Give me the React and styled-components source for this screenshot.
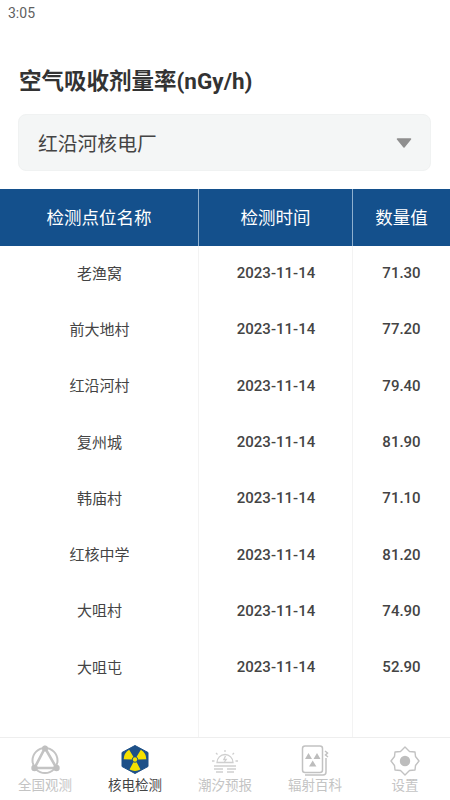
import React from 'react';
import styled, { createGlobalStyle } from 'styled-components';

const GlobalStyle = createGlobalStyle`
  * {
    box-sizing: border-box;
    margin: 0;
    padding: 0;
  }

  body {
    background: #fff;
    font-family: Roboto, "Noto Sans CJK SC", sans-serif;
  }
`;

const Page = styled.div`
  width: 450px;
  height: 800px;
  display: flex;
  flex-direction: column;
  overflow: hidden;
  background: #fff;
`;

const StatusBar = styled.div`
  height: 25px;
  padding: 4px 0 0 8px;
  font-size: 14px;
  line-height: 18px;
  color: #5f5f5f;
`;

const Title = styled.h1`
  margin: 41px 0 0 19px;
  font-size: 22.5px;
  line-height: 30px;
  font-weight: 700;
  color: #333;
`;

const Select = styled.div`
  margin: 18px 19px 18px 18px;
  height: 57px;
  padding: 0 18px 0 19px;
  display: flex;
  align-items: center;
  justify-content: space-between;
  background: #f4f6f6;
  border: 1px solid #f0f2f2;
  border-radius: 8px;
  font-size: 19.8px;
  color: #444;
`;

const Caret = styled.svg`
  width: 16px;
  height: 10px;
  display: block;
`;

const Table = styled.div`
  flex: 1;
  display: flex;
  flex-direction: column;
  min-height: 0;
`;

const HeadRow = styled.div`
  display: grid;
  grid-template-columns: 199px 154px 97px;
  height: 57px;
  background: #14508c;
`;

const HeadCell = styled.div`
  display: flex;
  align-items: center;
  justify-content: center;
  padding-bottom: 2px;
  font-size: 17.5px;
  color: #fff;
  border-right: ${p => (p.$last ? 'none' : '1px solid #8fb0cf')};
`;

const Body = styled.div`
  flex: 1;
  display: grid;
  grid-template-columns: 199px 154px 97px;
  grid-auto-rows: 56.3px;
  background:
    linear-gradient(#f3f3f3, #f3f3f3) 198px 0 / 1px 100% no-repeat,
    linear-gradient(#f3f3f3, #f3f3f3) 352px 0 / 1px 100% no-repeat;
`;

const Cell = styled.div`
  display: flex;
  align-items: center;
  justify-content: center;
  padding-bottom: ${p => (p.$name ? '4px' : '2px')};
  font-size: 15px;
  font-weight: ${p => (p.$name ? 400 : 500)};
  color: #444;
`;

const TabBar = styled.nav`
  height: 63px;
  display: grid;
  grid-template-columns: repeat(5, 90px);
  border-top: 1px solid #eee;
  background: #fff;
`;

const Tab = styled.div`
  display: flex;
  flex-direction: column;
  align-items: center;
  padding-top: 7px;
`;

const TabIcon = styled.svg`
  width: 32px;
  height: 32px;
  display: block;
`;

const TabLabel = styled.span`
  margin-top: -1px;
  font-size: 13.5px;
  line-height: 18px;
  color: ${p => (p.$active ? '#444' : '#c4c4c4')};
`;

const rows = [
  ['老渔窝', '71.30'],
  ['前大地村', '77.20'],
  ['红沿河村', '79.40'],
  ['复州城', '81.90'],
  ['韩庙村', '71.10'],
  ['红核中学', '81.20'],
  ['大咀村', '74.90'],
  ['大咀屯', '52.90'],
];

const NetworkIcon = () => (
  <TabIcon viewBox="0 0 32 32">
    <circle cx="16" cy="15.5" r="12.5" fill="none" stroke="#c4c4c4" strokeWidth="2" />
    <path d="M16 3 L27.5 23 H5.5 Z" fill="none" stroke="#c4c4c4" strokeWidth="2.6" />
    <circle cx="16" cy="3.4" r="3" fill="#c0c0c0" />
    <circle cx="5.5" cy="23" r="3.2" fill="#c0c0c0" />
    <circle cx="27.5" cy="23" r="3.2" fill="#c0c0c0" />
  </TabIcon>
);

const blade = 'M14.4 11.7 L10.5 4.6 A11.5 11.5 0 0 1 21.5 4.6 L17.6 11.7 A3.2 3.2 0 0 0 14.4 11.7 Z';

const NuclearIcon = () => (
  <TabIcon viewBox="0 0 32 32">
    <path
      d="M16 0.5 L29 7.5 V21.5 L16 28.5 L3 21.5 V7.5 Z"
      fill="#1d5088"
      stroke="#1d5088"
      strokeWidth="1"
      strokeLinejoin="round"
    />
    <path d={blade} fill="#f5e100" transform="rotate(-60 16 14.5)" />
    <path d={blade} fill="#f5e100" transform="rotate(60 16 14.5)" />
    <path d={blade} fill="#f5e100" transform="rotate(180 16 14.5)" />
    <circle cx="16" cy="14.5" r="2.2" fill="#f5e100" />
  </TabIcon>
);

const TideIcon = () => (
  <TabIcon viewBox="0 0 32 32">
    <g fill="none" stroke="#cfcfcf" strokeWidth="1.3">
      <path d="M8 17.5 A8 8 0 0 1 24 17.5 Z" />
      <path d="M16 5 V7 M7 8 L8.5 9.5 M25 8 L23.5 9.5 M3 16 H5.5 M26.5 16 H29" />
      <path d="M5 21 H27 M5 24 H14 M18 24 H27 M7 27 H14 M18 27 H25" />
      <path d="M16.5 11 L14.8 14.5 H17.2 L15.5 17" />
    </g>
  </TabIcon>
);

const WikiIcon = () => (
  <TabIcon viewBox="0 0 32 32">
    <g fill="none" stroke="#c2c2c2" strokeWidth="1.5">
      <rect x="3.5" y="1" width="20" height="26.5" rx="2.5" />
      <path d="M6 30 H24 Q27 30 27 27 V13" />
      <path d="M26 6 L28.5 8 L26.5 10 L29 12" />
    </g>
    <path d="M6 14 L9.5 8 L13 14 Z M14.5 14 L18 8 L21.5 14 Z M10 21.5 L13.7 15.5 L17.4 21.5 Z" fill="#bdbdbd" />
  </TabIcon>
);

const SettingsIcon = () => (
  <TabIcon viewBox="0 0 32 32">
    <path
      d="M16 2 L20.5 6.5 L26 7 L26.5 11.5 L30 16 L26.5 20.5 L26 25 L20.5 25.5 L16 30 L11.5 25.5 L6 25 L5.5 20.5 L2 16 L5.5 11.5 L6 7 L11.5 6.5 Z"
      fill="none"
      stroke="#c2c2c2"
      strokeWidth="1.4"
      strokeLinejoin="round"
    />
    <circle cx="16" cy="16" r="5.2" fill="#bdbdbd" />
  </TabIcon>
);

const tabs = [
  { label: '全国观测', Icon: NetworkIcon },
  { label: '核电检测', Icon: NuclearIcon, active: true },
  { label: '潮汐预报', Icon: TideIcon },
  { label: '辐射百科', Icon: WikiIcon },
  { label: '设置', Icon: SettingsIcon },
];

export default function App() {
  return (
    <>
      <GlobalStyle />
      <Page>
        <StatusBar>3:05</StatusBar>
        <Title>空气吸收剂量率(nGy/h)</Title>
        <Select>
          红沿河核电厂
          <Caret viewBox="0 0 16 10">
            <path d="M1.5 1 H14.5 L8 9 Z" fill="#8f8f8f" stroke="#8f8f8f" strokeWidth="1.5" strokeLinejoin="round" />
          </Caret>
        </Select>
        <Table>
          <HeadRow>
            <HeadCell>检测点位名称</HeadCell>
            <HeadCell>检测时间</HeadCell>
            <HeadCell $last>数量值</HeadCell>
          </HeadRow>
          <Body>
            {rows.map(([name, value]) => (
              <React.Fragment key={name}>
                <Cell $name>{name}</Cell>
                <Cell>2023-11-14</Cell>
                <Cell>{value}</Cell>
              </React.Fragment>
            ))}
          </Body>
        </Table>
        <TabBar>
          {tabs.map(({ label, Icon, active }) => (
            <Tab key={label}>
              <Icon />
              <TabLabel $active={active}>{label}</TabLabel>
            </Tab>
          ))}
        </TabBar>
      </Page>
    </>
  );
}
